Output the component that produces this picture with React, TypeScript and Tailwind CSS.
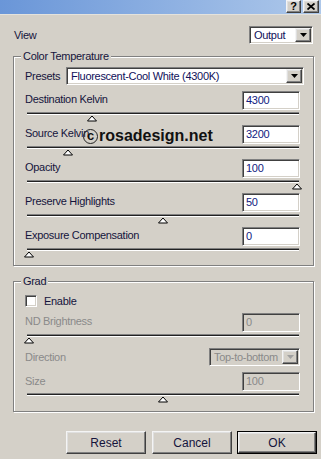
import React from 'react';

const sunken =
  'border border-t-[#808080] border-l-[#808080] border-r-white border-b-white shadow-[inset_1px_1px_0_#404040,inset_-1px_-1px_0_#d4d0c8]';
const raised =
  'border border-t-[#f4f4f4] border-l-[#f4f4f4] border-r-[#404040] border-b-[#404040] shadow-[inset_-1px_-1px_0_#808080,inset_1px_1px_0_#dfdfdf]';

const Arrow = ({ disabled = false }: { disabled?: boolean }) => (
  <div className={`w-[16px] h-full flex items-center justify-center bg-[#d4d0c8] ${raised}`}>
    <svg width="7" height="4" viewBox="0 0 7 4">
      <polygon points="0,0 7,0 3.5,4" fill={disabled ? '#a0a0a0' : '#000'} />
    </svg>
  </div>
);

const Select = ({ text, className, disabled = false }: { text: string; className: string; disabled?: boolean }) => (
  <div className={`flex items-stretch ${sunken} ${disabled ? 'bg-[#d4d0c8]' : 'bg-white'} ${className}`}>
    <div className={`flex-1 flex items-center pl-[4px] ${disabled ? 'text-[#8a8a8a]' : 'text-[#10105a]'}`}>{text}</div>
    <div className="p-[1px] pl-0">
      <Arrow disabled={disabled} />
    </div>
  </div>
);

const Input = ({ value, disabled = false }: { value: string; disabled?: boolean }) => (
  <div
    className={`w-[58px] h-[19px] flex items-center pl-[3px] ${sunken} ${
      disabled ? 'bg-[#d4d0c8] text-[#8a8a8a]' : 'bg-white text-[#102080]'
    }`}
  >
    {value}
  </div>
);

const Track = ({ pct }: { pct: number }) => (
  <div className="relative mt-[2px] ml-[2px] mr-[1px] h-[3px] border-t border-b border-t-[#808080] border-b-white bg-[#222]">
    <svg
      className="absolute top-[2px]"
      style={{ left: `calc(${pct} * (100% - 4px) - 3px)` }}
      width="10"
      height="7"
      viewBox="0 0 10 7"
    >
      <polygon points="0.5,6 5,1 9.5,6" fill="#fff" stroke="#000" strokeWidth="1" />
    </svg>
  </div>
);

const SliderRow = ({ label, value, pct }: { label: string; value: string; pct: number }) => (
  <div className="h-[34px] pr-[4px]">
    <div className="flex items-center justify-between h-[19px]">
      <span className="pb-[3px]">{label}</span>
      <Input value={value} />
    </div>
    <Track pct={pct} />
  </div>
);

const GroupBox = ({ title, className, children }: { title: string; className: string; children: React.ReactNode }) => (
  <div
    className={`relative ml-[13px] w-[301px] border border-[#808080] shadow-[inset_1px_1px_0_#fff,1px_1px_0_#fff] ${className}`}
  >
    <span className="absolute -top-[8px] left-[7px] px-[2px] bg-[#d4d0c8] leading-[14px]">{title}</span>
    {children}
  </div>
);

const sliders = [
  { label: 'Destination Kelvin', value: '4300', pct: 0.235 },
  { label: 'Source Kelvin', value: '3200', pct: 0.146 },
  { label: 'Opacity', value: '100', pct: 1 },
  { label: 'Preserve Highlights', value: '50', pct: 0.5 },
  { label: 'Exposure Compensation', value: '0', pct: 0 },
];

export default function App() {
  return (
    <div
      className="relative w-[321px] h-[459px] overflow-hidden bg-[#d4d0c8] text-[11px] tracking-[-0.3px] text-[#14143c] flex flex-col"
      style={{ fontFamily: '"Liberation Sans", Arial, sans-serif' }}
    >
      {/* title bar */}
      <div className="h-[15px] bg-gradient-to-r from-[#6a96d8] to-[#aec8ea] border-b border-[#e4e2dc] flex justify-end items-start pr-[2px] gap-[2px]">
        <div className={`w-[15px] h-[13px] bg-[#d4d0c8] ${raised} flex items-center justify-center font-bold text-black text-[11px]`}>?</div>
        <div className={`w-[16px] h-[13px] bg-[#d4d0c8] ${raised} flex items-center justify-center text-black`}>
          <svg width="8" height="7" viewBox="0 0 8 7">
            <path d="M0.5 0.5 L7.5 6.5 M7.5 0.5 L0.5 6.5" stroke="#000" strokeWidth="1.8" />
          </svg>
        </div>
      </div>

      {/* view */}
      <div className="mt-[11px] h-[18px] pl-[14px] pr-[8px] flex items-center justify-between">
        <span>View</span>
        <Select text="Output" className="w-[64px] h-[18px]" />
      </div>

      <GroupBox title="Color Temperature" className="mt-[12px] h-[210px] pl-[11px] pr-[9px] pt-[10px]">
        <div className="flex items-center justify-between h-[18px]">
          <span>Presets</span>
          <Select text="Fluorescent-Cool White (4300K)" className="w-[238px] h-[18px]" />
        </div>
        <div className="mt-[6px]">
          {sliders.map((s) => (
            <SliderRow key={s.label} {...s} />
          ))}
        </div>
      </GroupBox>

      <GroupBox title="Grad" className="mt-[15px] h-[131px] pl-[11px] pr-[13px] pt-[13px]">
        <div className="flex items-center h-[12px]">
          <div className={`w-[12px] h-[12px] bg-white ${sunken}`} />
          <span className="ml-[7px]">Enable</span>
        </div>
        <div className="mt-[6px] flex items-center justify-between h-[19px] text-[#8a8a8a]">
          <span className="pb-[3px]">ND Brightness</span>
          <Input value="0" disabled />
        </div>
        <Track pct={0} />
        <div className="mt-[11px] flex items-center justify-between h-[18px] text-[#8a8a8a]">
          <span>Direction</span>
          <Select text="Top-to-bottom" className="w-[91px] h-[18px]" disabled />
        </div>
        <div className="mt-[6px] flex items-center justify-between h-[19px] text-[#8a8a8a]">
          <span>Size</span>
          <Input value="100" disabled />
        </div>
        <Track pct={0.5} />
      </GroupBox>

      {/* buttons */}
      <div className="mt-[19px] pl-[66px] flex text-[12px] tracking-normal">
        <div className={`w-[80px] h-[23px] flex items-center justify-center ${raised}`}>Reset</div>
        <div className={`ml-[6px] w-[80px] h-[23px] flex items-center justify-center ${raised}`}>Cancel</div>
        <div className="ml-[5px] w-[80px] h-[23px] border border-black">
          <div className={`w-full h-full flex items-center justify-center ${raised}`}>OK</div>
        </div>
      </div>

      {/* watermark */}
      <div className="absolute left-[83px] top-[124px] flex items-center text-[#111] tracking-normal">
        <div className="w-[15px] h-[15px] rounded-full border-[1.5px] border-[#222] flex items-center justify-center font-bold text-[13px] leading-none pb-[2px]">
          c
        </div>
        <span className="ml-[1px] font-bold text-[16px]">rosadesign.net</span>
      </div>
    </div>
  );
}
